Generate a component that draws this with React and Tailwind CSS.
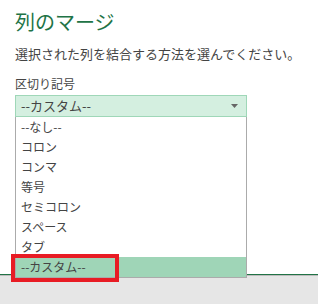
import React, { useState } from 'react';

const options = ['--なし--', 'コロン', 'コンマ', '等号', 'セミコロン', 'スペース', 'タブ', '--カスタム--'];

function App() {
  // 選択中の区切り記号
  const [selected, setSelected] = useState('--カスタム--');

  return (
    <div
      className="w-[318px] h-[304px] bg-[#e6e6e6] text-[#444444]"
      style={{ fontFamily: '"Noto Sans CJK JP", "Liberation Sans", sans-serif' }}
    >
      <div className="h-[275px] bg-white border-b border-[#217346] shadow-[0_1px_0_#bcbcbc] px-[15px] pt-[8px]">
        <h1 className="text-[20px] leading-[28px] text-[#217346]">列のマージ</h1>
        <p className="mt-[8px] text-[13px] leading-[20px]">選択された列を結合する方法を選んでください。</p>
        <label className="block mt-[12px] text-[12px] leading-[16px]">区切り記号</label>

        <div className="relative mt-[3px] w-[232px]">
          <div className="flex items-center justify-between h-[22px] pl-[5px] pr-[8px] bg-[#d4efe0] border border-[#9fd7b8] text-[13px]">
            <span>{selected}</span>
            <svg width="7" height="4" viewBox="0 0 7 4">
              <path d="M0 0H7L3.5 4Z" fill="#666666" />
            </svg>
          </div>

          {/* ドロップダウン */}
          <ul className="absolute left-0 top-[22px] w-[232px] bg-white border-x border-b border-[#ababab] z-10">
            {options.map((opt) => (
              <li
                key={opt}
                onClick={() => setSelected(opt)}
                className={`h-[20px] leading-[20px] pl-[5px] text-[12px] ${
                  opt === '--カスタム--' ? 'bg-[#9fd5b7]' : ''
                }`}
              >
                {opt}
              </li>
            ))}
          </ul>

          {/* 赤枠 */}
          <div className="absolute left-[-4px] top-[159px] w-[108px] h-[28px] border-[4px] border-[#e81c24] z-20" />
        </div>
      </div>
    </div>
  );
}

export default App;
